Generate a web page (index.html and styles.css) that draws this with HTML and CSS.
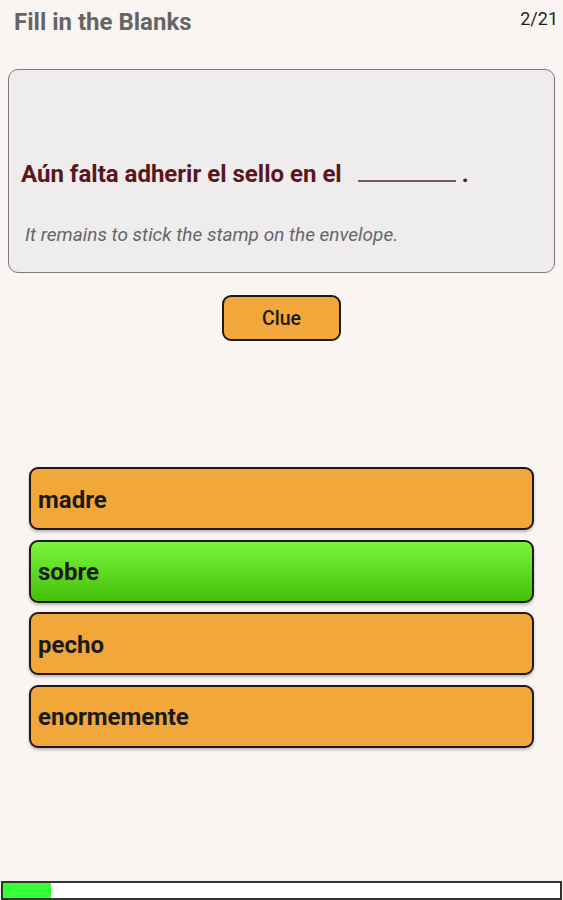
FILE: index.html
```html
<!DOCTYPE html>
<html lang="en">
<head>
	<meta charset="UTF-8">
	<title>Fill in the Blanks</title>
	<link rel="stylesheet" href="styles.css">
</head>
<body>
	<div id="screen">
		<div class="top">
			<h2>Fill in the Blanks</h2>
			<span class="count">2/21</span>
		</div>

		<div class="card">
			<p class="sentence">Aún falta adherir el sello en el <span class="blank"></span> <span class="dot">.</span></p>
			<p class="trans">It remains to stick the stamp on the envelope.</p>
		</div>

		<div class="clue">
			<button>Clue</button>
		</div>

		<ul class="options">
			<li>madre</li>
			<li class="right">sobre</li>
			<li>pecho</li>
			<li>enormemente</li>
		</ul>

		<div class="progress">
			<div class="fill" style="width: 48px"></div>
		</div>
	</div>
</body>
</html>
```

FILE: styles.css
```css
h2, p, ul, li {
	padding: 0;
	margin: 0;
}

body {
	margin: 0;
	background: #faf5f2;
	font-family: Roboto, "Liberation Sans", sans-serif;
}

ul {
	list-style: none;
}

#screen {
	width: 563px;
	height: 900px;
	display: flex;
	flex-direction: column;
}

.top {
	display: flex;
	justify-content: space-between;
	align-items: flex-start;
	padding: 8px 5px 0 14px;
}

.top h2 {
	font-size: 24px;
	line-height: 28px;
	font-weight: 700;
	color: #656565;
}

.top .count {
	font-size: 18px;
	line-height: 22px;
	color: #222;
}

.card {
	margin: 33px 8px 0 8px;
	padding: 89px 12px 25px 12px;
	border: 1.5px solid #7a7a7a;
	border-radius: 10px;
	background: #eeecec;
}

.sentence {
	font-size: 24px;
	line-height: 30px;
	font-weight: 700;
	color: #5a1620;
}

.sentence .blank {
	display: inline-block;
	width: 98px;
	height: 2.5px;
	margin-left: 10px;
	background: #7a5a60;
	vertical-align: 0;
}

.trans {
	margin-top: 34px;
	padding-left: 4px;
	font-size: 19px;
	line-height: 24px;
	font-style: italic;
	color: #666;
}

.clue {
	display: flex;
	justify-content: center;
	margin-top: 22px;
}

.clue button {
	width: 119px;
	height: 46px;
	border: 2px solid #1e1a14;
	border-radius: 9px;
	background: #f2a73b;
	font-family: Roboto, "Liberation Sans", sans-serif;
	font-size: 19.5px;
	font-weight: 500;
	color: #1a1a1a;
}

.options {
	display: flex;
	flex-direction: column;
	gap: 9.5px;
	margin: 126px 29px 0 29px;
}

.options li {
	height: 57px;
	display: flex;
	align-items: center;
	padding: 2px 0 0 7px;
	border: 2px solid #1e1a14;
	border-radius: 9px;
	background: #f2a73b;
	box-shadow: 0 2px 3px rgba(0, 0, 0, 0.25);
	font-size: 24px;
	font-weight: 700;
	color: #1a1a1a;
}

.options .right {
	background: linear-gradient(#7af53c, #45c00a);
}

.progress {
	margin: auto 1px 0 1px;
	height: 15px;
	border: 2px solid #333;
	background: #fff;
}

.progress .fill {
	height: 100%;
	background: #36ff36;
}
```
